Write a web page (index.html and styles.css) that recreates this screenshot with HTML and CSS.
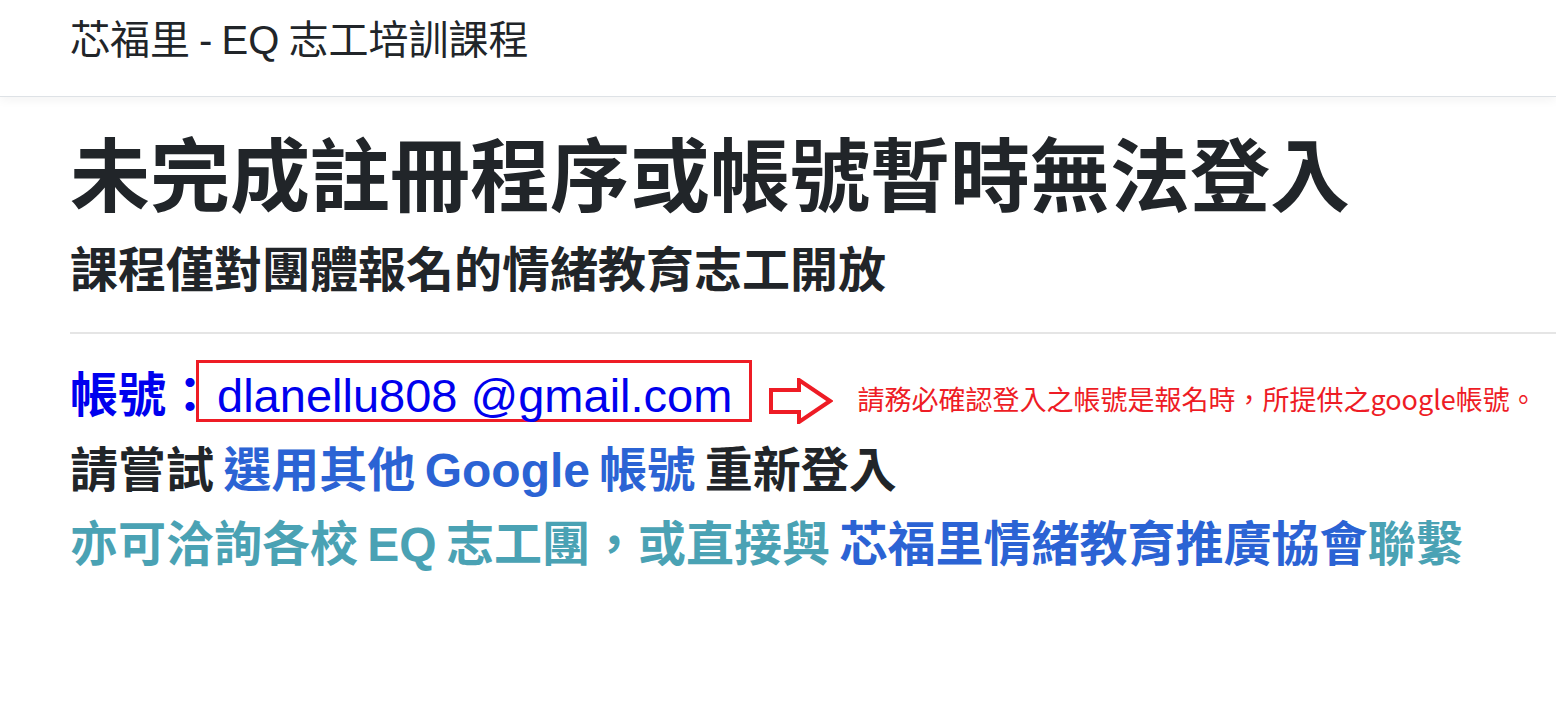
FILE: index.html
```html
<!DOCTYPE html>
<html lang="zh-Hant">
<head>
    <meta charset="UTF-8">
    <meta name="viewport" content="width=device-width, initial-scale=1.0">
    <title>芯福里 - EQ 志工培訓課程</title>
    <link rel="stylesheet" href="styles.css">
</head>
<body>
    <header class="site-header">芯福里 - EQ 志工培訓課程</header>

    <main class="content">
        <h1 class="title">未完成註冊程序或帳號暫時無法登入</h1>
        <h2 class="subtitle">課程僅對團體報名的情緒教育志工開放</h2>
        <hr class="divider">

        <div class="account-row">
            <span class="account-label">帳號：</span>
            <span class="account-box">dlanellu808 @gmail.com</span>
            <svg class="arrow" width="64" height="46" viewBox="0 0 64 46">
                <path d="M2 12 H30 V2 L61 23 L30 44 V34 H2 Z" fill="#fff" stroke="#ee1c25" stroke-width="4" stroke-linejoin="miter"/>
            </svg>
            <span class="account-note">請務必確認登入之帳號是報名時，所提供之google帳號。</span>
        </div>

        <p class="line">請嘗試 <a href="#" class="link">選用其他 Google 帳號</a> 重新登入</p>
        <p class="line info">亦可洽詢各校 EQ 志工團，或直接與 <a href="#" class="link">芯福里情緒教育推廣協會</a>聯繫</p>
    </main>
</body>
</html>
```

FILE: styles.css
```css
body {
    margin: 0;
    font-family: "Liberation Sans", "Noto Sans CJK TC", sans-serif;
    color: #212529;
    background-color: #fff;
}
.site-header {
    padding: 16px 70px 32px;
    font-size: 40px;
    line-height: 48px;
    word-spacing: -2px;
    border-bottom: 1px solid #dee2e6;
    box-shadow: 0 3px 10px rgba(0, 0, 0, 0.05);
}
.content {
    padding: 33px 0 0 70px;
}
.title {
    margin: 0;
    font-size: 80px;
    line-height: 96px;
    font-weight: bold;
}
.subtitle {
    margin: 16px 0 0;
    font-size: 48px;
    line-height: 58px;
    font-weight: bold;
}
.divider {
    margin: 32px 0 26px;
    border: none;
    border-top: 2px solid #e5e5e5;
}
.account-row {
    display: flex;
    align-items: baseline;
    white-space: nowrap;
    font-size: 48px;
    line-height: 48px;
}
.account-label {
    color: #0000ee;
    font-weight: bold;
}
.account-box {
    margin-left: -18px;
    padding: 9px 17px 0 18px;
    height: 47px;
    border: 3px solid #ee1c25;
    color: #0000ee;
    font-size: 47px;
}
.arrow {
    align-self: flex-start;
    margin: 18px 0 0 17px;
}
.account-note {
    align-self: flex-start;
    margin: 22px 0 0 24px;
    font-family: "Noto Sans CJK TC", "Liberation Sans", sans-serif;
    font-size: 27px;
    line-height: 34px;
    color: #ee1c25;
}
.line {
    margin: 18px 0 0;
    font-size: 48px;
    line-height: 58px;
    font-weight: bold;
    word-spacing: -4px;
    white-space: nowrap;
}
.line + .line {
    margin-top: 16px;
}
.info {
    color: #4aa2b4;
}
.link {
    color: #2b63d4;
    text-decoration: none;
}
```
